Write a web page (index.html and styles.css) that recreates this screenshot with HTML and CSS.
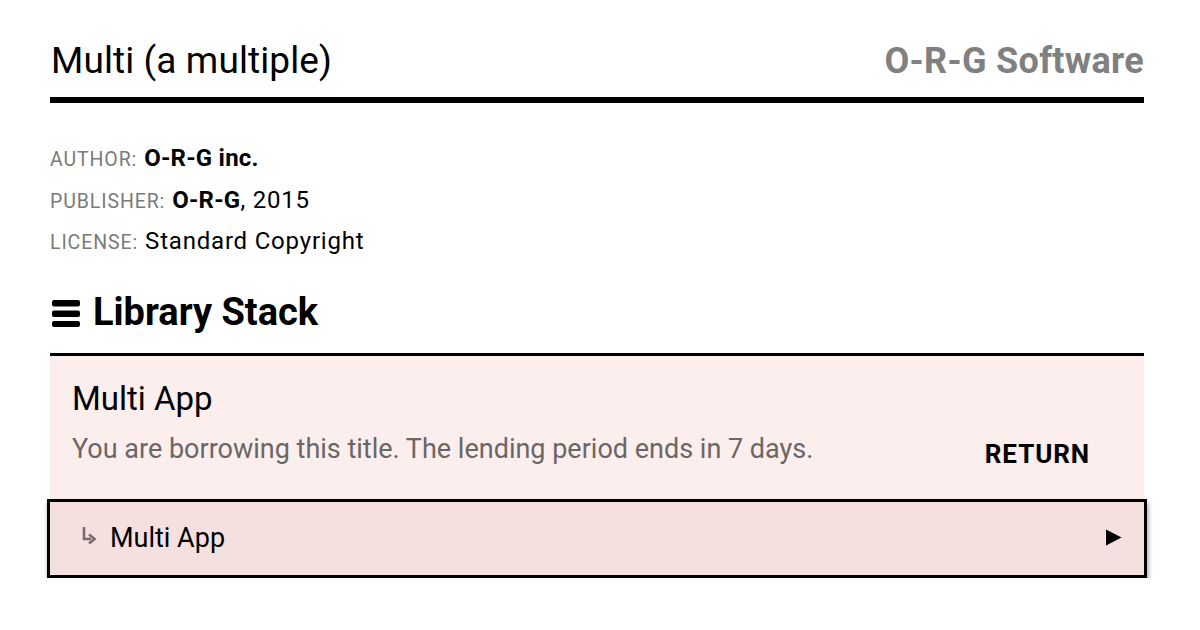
FILE: index.html
```html
<!DOCTYPE html>
<html>
<head>
<meta charset="utf-8">
<link rel="stylesheet" href="styles.css">
</head>
<body>
<div class="page">
  <header class="top">
    <h1 class="title">Multi (a multiple)</h1>
    <div class="brand">O-R-G Software</div>
  </header>
  <dl class="meta">
    <div class="meta-row"><dt>Author:</dt><dd><b>O-R-G inc.</b></dd></div>
    <div class="meta-row"><dt>Publisher:</dt><dd><b>O-R-G</b>, 2015</dd></div>
    <div class="meta-row"><dt>License:</dt><dd>Standard Copyright</dd></div>
  </dl>
  <h2 class="stack-title">
    <svg class="burger" width="28" height="28" viewBox="0 0 28 28"><rect x="0" y="1" width="28" height="6.5" rx="2"/><rect x="0" y="11.5" width="28" height="6.5" rx="2"/><rect x="0" y="22" width="28" height="6" rx="2"/></svg>
    <span>Library Stack</span>
  </h2>
  <section class="stack">
    <div class="loan">
      <div class="loan-text">
        <div class="loan-name">Multi App</div>
        <div class="loan-desc">You are borrowing this title. The lending period ends in 7 days.</div>
      </div>
      <div class="return">RETURN</div>
    </div>
    <div class="item">
      <svg class="arrow" width="14" height="18" viewBox="0 0 14 18"><path d="M2 0 V12 H9" fill="none" stroke="#7a6c6c" stroke-width="2.6"/><path d="M7 7.5 L12.5 12 L7 16.5" fill="none" stroke="#7a6c6c" stroke-width="2.6"/></svg>
      <span class="item-name">Multi App</span>
      <svg class="play" width="17" height="17" viewBox="0 0 17 17"><path d="M1 0.5 L16.5 8.5 L1 16.5 Z" fill="#000"/></svg>
    </div>
  </section>
</div>
</body>
</html>
```

FILE: styles.css
```css
* { box-sizing: border-box; }
html, body { margin: 0; padding: 0; background: #fff; }
body { font-family: Roboto, "Noto Sans", sans-serif; color: #000; }
.page { width: 1094px; margin-left: 50px; padding-top: 37px; }
.top {
  display: flex; justify-content: space-between; align-items: baseline;
  border-bottom: 6px solid #000; padding-bottom: 12px;
}
.title { margin: 0; font-weight: 400; font-size: 37px; line-height: 48px; margin-left: 1px; letter-spacing: 0.1px; }
.brand { font-weight: 700; font-size: 36px; color: #808080; letter-spacing: 0.3px; }
.meta { margin: 41px 0 0 0; padding: 0; }
.meta-row { display: flex; align-items: baseline; height: 41.5px; }
.meta dt { text-transform: uppercase; font-size: 19.5px; color: #7a7a7a; letter-spacing: 0.9px; margin-right: 7px; }
.meta dd { margin: 0; font-size: 24px; letter-spacing: 0.8px; }
.meta dd b { font-weight: 700; letter-spacing: 0.2px; }
.stack-title {
  margin: 21px 0 0 2px; font-size: 38px; font-weight: 700; line-height: 44px;
  display: flex; align-items: center; gap: 13px;
}
.burger { fill: #000; margin-top: 2px; }
.stack { margin-top: 19px; border-top: 3px solid #000; }
.loan {
  background: #fbeeed; display: flex; align-items: flex-start; justify-content: space-between;
  padding: 23px 54px 0 22px; height: 143px;
}
.loan-name { font-size: 33px; line-height: 40px; }
.loan-desc { font-size: 27px; color: #6b6666; margin-top: 13px; line-height: 34px; }
.return { font-weight: 700; font-size: 26px; letter-spacing: 0.9px; line-height: 32px; margin-top: 59px; }
.item {
  margin: 0 -3px 0 -3px; background: #f6e0df; border: 3px solid #000; height: 79px;
  display: flex; align-items: center; padding: 0 22px 0 32px;
  box-shadow: 1px 4px 5px rgba(0,0,0,0.4);
}
.arrow { margin-right: 14px; margin-top: -4px; }
.item-name { font-size: 27px; flex: 1; }
.play { margin-top: -2px; }
```
